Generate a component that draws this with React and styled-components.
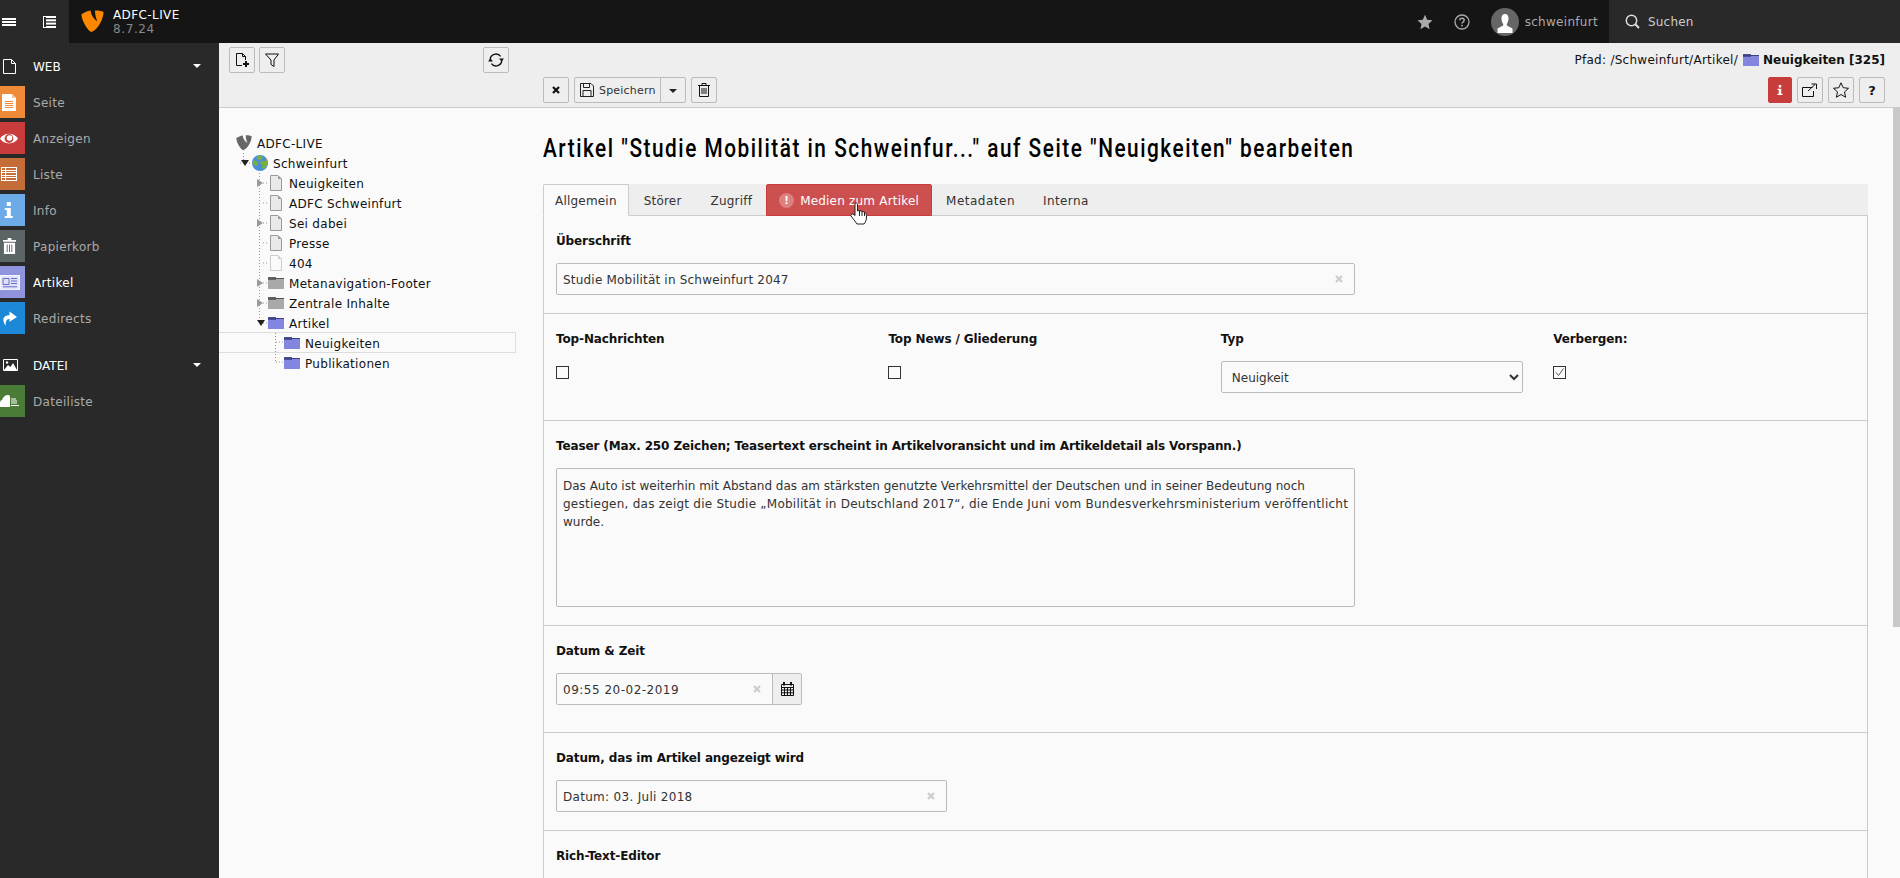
import React from "react";
import styled, { createGlobalStyle } from "styled-components";

const GlobalStyle = createGlobalStyle`
  html, body, #root { margin: 0; height: 100%; }
  body {
    overflow: hidden;
    background: #fafafa;
    font-family: "DejaVu Sans", Verdana, sans-serif;
    font-size: 12px;
    color: #111;
  }
  * { box-sizing: border-box; }
`;

// STYLED-COMPONENT
const Page = styled.div`
  height: 878px;
  display: flex;
  flex-direction: column;
`;
const Topbar = styled.header`
  height: 43px;
  flex: none;
  display: flex;
  align-items: stretch;
  background: #151515;
`;
const TopButton = styled.div`
  width: ${p => p.$w}px;
  padding-left: ${p => p.$pad}px;
  background: #292929;
  display: flex;
  align-items: center;
`;
const Brand = styled.div`
  display: flex;
  align-items: center;
  padding-left: 12px;
  gap: 9px;
`;
const BrandText = styled.div`
  color: #fff;
  font-size: 12px;
  line-height: 14px;
  letter-spacing: 0.4px;
  padding-top: 1px;
  small {
    display: block;
    font-size: 12px;
    letter-spacing: 0.6px;
    color: #888;
  }
`;
const TopRight = styled.div`
  margin-left: auto;
  display: flex;
  align-items: center;
  color: #aaa;
`;
const TopIcon = styled.span`
  display: flex;
  margin-right: ${p => p.$mr}px;
`;
const Avatar = styled.span`
  width: 28px;
  height: 28px;
  border-radius: 50%;
  background: #666;
  display: flex;
  align-items: center;
  justify-content: center;
  margin-right: 6px;
  overflow: hidden;
`;
const UserName = styled.span`
  margin-right: 11px;
  letter-spacing: 0.3px;
`;
const SearchBox = styled.div`
  width: 291px;
  align-self: stretch;
  background: #292929;
  display: flex;
  align-items: center;
  padding-left: 16px;
  gap: 8px;
  color: #ccc;
  letter-spacing: 0.2px;
`;
const Body = styled.div`
  flex: 1;
  display: flex;
  min-height: 0;
`;
const Sidebar = styled.nav`
  width: 219px;
  flex: none;
  background: #292929;
  display: flex;
  flex-direction: column;
  gap: 4px;
`;
const GroupHead = styled.div`
  height: 43px;
  padding-top: 3px;
  margin-bottom: -4px;
  margin-top: ${p => (p.$first ? 0 : 4)}px;
  display: flex;
  align-items: center;
  color: #fff;
`;
const GroupIcon = styled.span`
  width: 33px;
  display: flex;
  padding-left: 3px;
`;
const Caret = styled.i`
  margin-left: auto;
  margin-right: 18px;
  width: 0;
  height: 0;
  border-left: 4px solid transparent;
  border-right: 4px solid transparent;
  border-top: 4px solid #fff;
`;
const NavItem = styled.div`
  height: 32px;
  display: flex;
  align-items: center;
  letter-spacing: 0.3px;
  color: ${p => (p.$active ? "#fff" : "#aaa")};
`;
const NavIcon = styled.span`
  width: 25px;
  height: 32px;
  margin-right: 8px;
  padding-right: ${p => (p.$pr === undefined ? 7 : p.$pr)}px;
  background: ${p => p.$bg};
  display: flex;
  align-items: center;
  justify-content: center;
`;
// text sits a pixel lower than flex centering puts it
const Txt = styled.span`
  padding-top: 2px;
  white-space: nowrap;
  ${p => p.$ls && `letter-spacing: ${p.$ls}px;`}
`;
const Main = styled.div`
  flex: 1;
  min-width: 0;
  display: flex;
  flex-direction: column;
`;
const DocHeader = styled.div`
  height: 65px;
  flex: none;
  background: #eee;
  border-bottom: 1px solid #ccc;
  display: flex;
`;
const TreeTools = styled.div`
  width: 324px;
  flex: none;
  padding: 4px 34px 0 10px;
  display: flex;
  align-items: flex-start;
  gap: 4px;
`;
const DocTools = styled.div`
  flex: 1;
  display: flex;
  flex-direction: column;
  padding-right: 15px;
`;
const PathRow = styled.div`
  height: 34px;
  display: flex;
  align-items: center;
  justify-content: flex-end;
  gap: 4px;
  font-size: 12px;
  b { font-weight: 700; }
  span { margin-right: 1px; letter-spacing: 0.27px; }
`;
const ButtonRow = styled.div`
  display: flex;
  align-items: center;
  gap: 5px;
`;
const Btn = styled.div`
  width: ${p => p.$w || 26}px;
  height: 26px;
  background: ${p => (p.$danger ? "#c83c3c" : "#eee")};
  border: 1px solid ${p => (p.$danger ? "#c83c3c" : "#bbb")};
  border-radius: 2px;
  display: flex;
  align-items: center;
  justify-content: center;
  margin-left: ${p => (p.$push ? "auto" : 0)};
  flex: none;
`;
const SaveGroup = styled.div`
  height: 26px;
  width: 112px;
  border: 1px solid #bbb;
  border-radius: 2px;
  background: #eee;
  display: flex;
  align-items: center;
  font-size: 11px;
  letter-spacing: 0.2px;
  color: #333;
`;
const SaveMain = styled.div`
  flex: 1;
  display: flex;
  align-items: center;
  gap: 5px;
  padding-left: 5px;
  height: 100%;
  border-right: 1px solid #bbb;
`;
const SaveCaret = styled.div`
  width: 24px;
  display: flex;
  justify-content: center;
  i {
    border-left: 4px solid transparent;
    border-right: 4px solid transparent;
    border-top: 4px solid #222;
    margin-top: 1px;
  }
`;
const Workspace = styled.div`
  flex: 1;
  display: flex;
  min-height: 0;
`;
const TreePanel = styled.aside`
  width: 324px;
  flex: none;
  padding-top: 25px;
  position: relative;
`;
const TreeLines = styled.svg`
  position: absolute;
  left: 0;
  top: 0;
`;
const TreeRow = styled.div`
  height: 20px;
  width: 297px;
  position: relative;
  display: flex;
  align-items: center;
  padding-left: ${p => 5 + p.$level * 16}px;
  color: #111;
  letter-spacing: 0.3px;
  ${p =>
    p.$selected &&
    `&::after {
      content: "";
      position: absolute;
      left: 0;
      right: 0;
      top: -1px;
      bottom: 0;
      border: 1px solid #ddd;
      border-left: 0;
    }`}
`;
const Twist = styled.span`
  width: 12px;
  display: flex;
  padding-left: 1px;
`;
const ArrowRight = styled.i`
  border-top: 4px solid transparent;
  border-bottom: 4px solid transparent;
  border-left: 6px solid #999;
`;
const ArrowDown = styled.i`
  border-left: 4px solid transparent;
  border-right: 4px solid transparent;
  border-top: 6px solid #222;
`;
const TreeIcon = styled.span`
  width: 16px;
  height: 16px;
  margin-right: 5px;
  display: flex;
  align-items: center;
  justify-content: center;
`;
const Content = styled.main`
  flex: 1;
  min-width: 0;
  display: flex;
  flex-direction: column;
  padding-top: 21px;
  padding-right: 25px;
`;
const Title = styled.h1`
  margin: 0 0 17px;
  height: 38px;
  line-height: 38px;
  font-family: Roboto, "Liberation Sans", sans-serif;
  font-weight: 500;
  font-size: 26px;
  letter-spacing: 1.9px;
  color: #000;
  white-space: nowrap;
  transform: scaleX(0.8);
  transform-origin: left center;
`;
const TabBar = styled.div`
  height: 32px;
  flex: none;
  display: flex;
  background: #eee;
  box-shadow: inset 0 -1px 0 #ccc;
`;
const Tab = styled.div`
  display: flex;
  align-items: center;
  gap: 6px;
  padding: 0 ${p => (p.$pad ? p.$pad : 14)}px;
  letter-spacing: 0.2px;
  color: ${p => (p.$error ? "#fff" : "#333")};
  background: ${p => (p.$active ? "#fafafa" : p.$error ? "#cd5051" : "transparent")};
  border: 1px solid ${p => (p.$active ? "#ccc" : p.$error ? "#c83c3c" : "transparent")};
  ${p => p.$active && "border-bottom-color: #fafafa; border-radius: 2px 2px 0 0;"}
  ${p => p.$error && "position: relative; border-radius: 2px 2px 0 0;"}
  border-left-width: ${p => (p.$active || p.$error ? 1 : 0)}px;
  border-right-width: ${p => (p.$active || p.$error ? 1 : 0)}px;
`;
const TabBadge = styled.span`
  width: 15px;
  height: 15px;
  border-radius: 50%;
  background: #dc8080;
  color: #fff;
  font-weight: 700;
  font-size: 10px;
  display: flex;
  align-items: center;
  justify-content: center;
`;
const HandCursor = styled.svg`
  position: absolute;
  left: 83px;
  top: 17px;
`;
const FormPanel = styled.div`
  flex: 1;
  min-height: 0;
  overflow: hidden;
  border-left: 1px solid #ccc;
  border-right: 1px solid #ccc;
`;
const Section = styled.section`
  padding: 15px 12px ${p => (p.$tall ? 27 : 18)}px;
  border-bottom: 1px solid #ccc;
`;
const Label = styled.div`
  font-weight: 700;
  line-height: 18px;
  padding-top: 1px;
  height: 18px;
  margin-bottom: 14px;
  letter-spacing: -0.12px;
  color: #111;
  white-space: nowrap;
`;
const Columns = styled.div`
  display: grid;
  grid-template-columns: repeat(4, 302px);
  column-gap: 30.4px;
`;
const Cell = styled.div`
  display: flex;
  flex-direction: column;
  align-items: flex-start;
`;
const Field = styled.div`
  width: ${p => p.$w}px;
  height: 32px;
  border: 1px solid #bbb;
  border-radius: 2px;
  background: #fafafa;
  display: flex;
  align-items: center;
  padding-left: 6px;
  color: #333;
`;
const Clear = styled.span`
  margin-left: auto;
  margin-right: 11px;
  color: #ccc;
  display: flex;
`;
const Addon = styled.span`
  width: 29px;
  height: 100%;
  background: #eee;
  border-left: 1px solid #bbb;
  display: flex;
  align-items: center;
  justify-content: center;
`;
const TextBox = styled.div`
  width: 799px;
  height: 139px;
  border: 1px solid #bbb;
  border-radius: 2px;
  padding: 8px 6px;
  line-height: 18px;
  color: #333;
`;
const TextLine = styled.div`
  white-space: nowrap;
  letter-spacing: ${p => p.$ls || 0}px;
`;
const Check = styled.span`
  display: flex;
  width: 13px;
  height: 13px;
  margin-top: 5px;
  border: 1px solid #333;
  background: #fafafa;
`;
const SelectBox = styled.select`
  width: 302px;
  height: 32px;
  border: 1px solid #bbb;
  border-radius: 2px;
  background: #fafafa;
  padding: 2px 6px 0;
  color: #333;
  font: inherit;
`;
const Scrollbar = styled.div`
  width: 7px;
  flex: none;
  background: #c8c8c8;
  height: 519px;
`;
const ScrollColumn = styled.div`
  width: 7px;
  flex: none;
  background: #fafafa;
`;

// ICONS
const Typo3 = ({ size = 23, color = "#ff8700" }) => (
  <svg width={size} height={size} viewBox="0 0 24 24">
    <path
      fill={color}
      d="M.5 4.5C3.5 2.5 7 1 10 .6C10.6 5 13 9.5 17 12C15.5 8 14.5 4 14.6 .5C17.5 .2 21 .8 23.5 2C23.5 9 18 20 11 23C7 22 .5 11 .5 4.5Z"
    />
  </svg>
);
const Hamburger = () => (
  <svg width="14" height="8" viewBox="0 0 14 8" fill="#fff">
    <rect width="14" height="2" />
    <rect y="3" width="14" height="2" />
    <rect y="6" width="14" height="2" />
  </svg>
);
const ListIcon = () => (
  <svg width="13" height="12" viewBox="0 0 13 12" fill="#fff">
    <path d="M0 0h1v12H0zM0 11h3v1H0zM0 0h3v1H0z" />
    <rect x="3" y="0" width="10" height="2" />
    <rect x="3" y="3.3" width="10" height="2" />
    <rect x="3" y="6.6" width="10" height="2" />
    <rect x="3" y="10" width="10" height="2" />
  </svg>
);
const Star = ({ fill = "#aaa", stroke = "none", size = 16 }) => (
  <svg width={size} height={size} viewBox="0 0 16 16">
    <path fill={fill} stroke={stroke} d="M8 .8l2.2 4.9 5.3.6-4 3.6 1.1 5.3L8 12.5l-4.6 2.7 1.1-5.3-4-3.6 5.3-.6z" />
  </svg>
);
const Help = () => (
  <svg width="16" height="16" viewBox="0 0 16 16" fill="none" stroke="#aaa">
    <circle cx="8" cy="8" r="7" strokeWidth="1.3" />
    <path d="M5.8 6.2C5.8 3.6 10.2 3.6 10.2 6.2C10.2 7.8 8 7.8 8 9.6" strokeWidth="1.5" />
    <rect x="7.2" y="10.8" width="1.6" height="1.6" fill="#aaa" stroke="none" />
  </svg>
);
const Person = () => (
  <svg width="20" height="22" viewBox="0 0 20 22" fill="#fff">
    <path d="M10 3C7.4 3 6.3 5 6.5 8C6.7 10.5 7.5 12 8.2 13V14.5L2.5 17.5V22H17.5V17.5L11.8 14.5V13C12.5 12 13.3 10.5 13.5 8C13.7 5 12.6 3 10 3Z" />
  </svg>
);
const SearchIcon = () => (
  <svg width="15" height="15" viewBox="0 0 15 15" fill="none" stroke="#ddd" strokeWidth="1.5">
    <circle cx="6.5" cy="6.5" r="5.2" />
    <path d="M10.3 10.3L14 14" strokeWidth="2" />
  </svg>
);
const NewPage = () => (
  <svg width="16" height="16" viewBox="0 0 16 16" fill="none" stroke="#111">
    <path d="M8 13.5H2.5V1.5H8.5L11.5 4.5V8M8.5 1.5V4.5H11.5" />
    <path d="M12 9V15M9 12H15" strokeWidth="2" />
  </svg>
);
const FilterIcon = () => (
  <svg width="16" height="16" viewBox="0 0 16 16" fill="none" stroke="#111">
    <path d="M1.5 2H14.5L10 8V14.5L7 12.5V8Z" />
  </svg>
);
const RefreshIcon = () => (
  <svg width="16" height="16" viewBox="0 0 16 16" fill="none" stroke="#111" strokeWidth="1.4">
    <path d="M2.2 8A5.8 5.8 0 0 1 12.6 4.4" />
    <path d="M13.8 8A5.8 5.8 0 0 1 3.4 11.6" />
    <path d="M11 6.5H16L13.5 9.5Z" fill="#111" stroke="none" />
    <path d="M0 9.5H5L2.5 6.5Z" fill="#111" stroke="none" />
  </svg>
);
const CloseIcon = ({ size = 8, color = "#111", w = 2.2 }) => (
  <svg width={size} height={size} viewBox="0 0 8 8" stroke={color} strokeWidth={w}>
    <path d="M1 1L7 7M7 1L1 7" />
  </svg>
);
const SaveIcon = () => (
  <svg width="14" height="14" viewBox="0 0 14 14" fill="none" stroke="#222">
    <path d="M.5.5H11L13.5 3V13.5H.5Z" />
    <path d="M3.5.5V4.5H9.5V.5M3 13.5V7.5H11V13.5" />
  </svg>
);
const TrashIcon = () => (
  <svg width="12" height="14" viewBox="0 0 12 14" fill="none" stroke="#111">
    <path d="M0 2.5H12M4 2.5V.5H8V2.5M1.5 2.5V13.5H10.5V2.5M4 5V11M6 5V11M8 5V11" />
  </svg>
);
const InfoIcon = ({ color = "#fff", size = 12 }) => (
  <svg width={size * 0.6} height={size} viewBox="0 0 6 12" fill={color}>
    <rect x="1.5" y="0" width="3" height="3" />
    <path d="M0 4.5H4.5V10.5H6V12H0V10.5H1.5V6H0Z" />
  </svg>
);
const OpenIcon = () => (
  <svg width="16" height="14" viewBox="0 0 16 14" fill="none" stroke="#111">
    <path d="M10.5 4.5H.5V13.5H11.5V8" />
    <path d="M6 8L13 1.5M9.5 1H14.5V6" />
  </svg>
);
const QuestionMark = styled.span`
  font-weight: 700;
  font-size: 13px;
  color: #111;
`;
const PageIcon = ({ light }) => (
  <svg width="12" height="16" viewBox="0 0 12 16">
    <path
      d="M.5.5H8L11.5 4V15.5H.5Z"
      fill={light ? "#fafafa" : "#e9e9e9"}
      stroke={light ? "#ccc" : "#999"}
    />
    <path d="M8 .5V4H11.5Z" fill={light ? "#ccc" : "#999"} />
  </svg>
);
const FolderIcon = ({ grey }) => (
  <svg width="16" height="12" viewBox="0 0 16 12">
    <rect y="2" width="16" height="10" fill={grey ? "#a9a9a9" : "#8286de"} />
    <rect y="0" width="8" height="3" fill={grey ? "#666" : "#4e5098"} />
    <rect y="1" width="16" height="1" fill={grey ? "#555" : "#3e4080"} />
  </svg>
);
const Globe = () => (
  <svg width="16" height="16" viewBox="0 0 16 16">
    <circle cx="8" cy="8" r="8" fill="#4a8fd8" />
    <path d="M5 1L9 .5L11 3L8 5L5 4.5ZM1.5 5L6 7L5.5 11L3 10.5L.5 8ZM9 6L15.5 6L15 10L12 14L10 13L10.5 10L8 8.5Z" fill="#7bb03a" />
    <path d="M13 2.5A8 8 0 0 1 16 8L14.5 6Z" fill="#d8913a" />
  </svg>
);
const CalendarIcon = () => (
  <svg width="13" height="14" viewBox="0 0 13 14" fill="none" stroke="#111">
    <path d="M.5 2.5H12.5V13.5H.5ZM.5 5.5H12.5M.5 8H12.5M.5 10.8H12.5M3.5 5.5V13.5M6.5 5.5V13.5M9.5 5.5V13.5" />
    <rect x="2" y="0" width="2" height="3.5" fill="#111" stroke="none" />
    <rect x="9" y="0" width="2" height="3.5" fill="#111" stroke="none" />
  </svg>
);
const CheckMark = () => (
  <svg width="11" height="11" viewBox="0 0 11 11" fill="none" stroke="#555">
    <path d="M2 5.5L4.5 8.5L9.5 1.5" />
  </svg>
);

const NavGlyphs = {
  page: (
    <svg width="14" height="17" viewBox="0 0 14 17" fill="#fff">
      <path d="M0 0H10L14 4V17H0Z" />
      <path d="M3 7.5H11M3 9.5H11M3 11.5H11M3 13.5H11" stroke="#ef8a38" />
      <path d="M10 0L14 4H10Z" fill="#f8c89c" />
    </svg>
  ),
  view: (
    <svg width="18" height="13" viewBox="0 0 18 13">
      <path d="M0 6.5C4 0 14 0 18 6.5C14 13 4 13 0 6.5Z" fill="#fff" />
      <circle cx="9" cy="6.5" r="4.4" fill="#c83c3c" />
      <circle cx="9.5" cy="6" r="2.8" fill="#fff" />
    </svg>
  ),
  list: (
    <svg width="16" height="15" viewBox="0 0 16 15" fill="none" stroke="#fff">
      <path d="M0 .5H16M0 3.5H16M0 5.5H16M0 8.5H16M0 10.5H16M0 13.5H16M.5 .5V13.5M15.5 .5V13.5M4.5 .5V13.5" />
    </svg>
  ),
  info: <InfoIcon size={16} />,
  trash: (
    <svg width="13" height="16" viewBox="0 0 14 17" fill="#fff">
      <path d="M0 2H14V4H0ZM5 0H9V2H5ZM1 5H13V17H1Z" />
      <path d="M4.5 7V15M7 7V15M9.5 7V15" stroke="#5c6566" />
    </svg>
  ),
  news: (
    <svg width="20" height="15" viewBox="0 0 20 15" fill="none" stroke="#fff">
      <path d="M.5 .5H19.5V14.5H.5Z" fill="#dfe1f8" stroke="#f4f4ff" strokeWidth="1.4" />
      <path d="M3 3.5H9V9.5H3ZM11 3.5H17M11 6H17M11 8.5H17M3 11.8H17" stroke="#6a70c8" />
    </svg>
  ),
  redirect: (
    <svg width="15" height="15" viewBox="0 0 16 15" fill="#fff">
      <path d="M8 0L16 6L8 11V8C5 8 3.5 10 4 15C1 12 -1 4 8 4Z" />
    </svg>
  ),
  files: (
    <svg width="19" height="12" viewBox="0 0 19 12" fill="#fff">
      <path d="M0 12V8C0 6 1 5 2 5C3 2 5 0 8 0C10 0 10 1 10 3V12Z" />
      <path d="M11 4H16M11 6H17M11 8H17M11 10.5H19" stroke="#fff" fill="none" />
    </svg>
  )
};

const tree = [
  { level: 0, icon: <Typo3 size={16} color="#666" />, label: "ADFC-LIVE" },
  { level: 1, open: true, icon: <Globe />, label: "Schweinfurt" },
  { level: 2, closed: true, icon: <PageIcon />, label: "Neuigkeiten" },
  { level: 2, icon: <PageIcon />, label: "ADFC Schweinfurt" },
  { level: 2, closed: true, icon: <PageIcon />, label: "Sei dabei" },
  { level: 2, icon: <PageIcon />, label: "Presse" },
  { level: 2, icon: <PageIcon light />, label: "404" },
  { level: 2, closed: true, icon: <FolderIcon grey />, label: "Metanavigation-Footer" },
  { level: 2, closed: true, icon: <FolderIcon grey />, label: "Zentrale Inhalte" },
  { level: 2, open: true, icon: <FolderIcon />, label: "Artikel" },
  { level: 3, selected: true, icon: <FolderIcon />, label: "Neuigkeiten" },
  { level: 3, icon: <FolderIcon />, label: "Publikationen" }
];

// COMPONENT
const App = () => (
  <>
    <GlobalStyle />
    <Page>
      <Topbar>
        <TopButton $w={34} $pad={2}>
          <Hamburger />
        </TopButton>
        <TopButton $w={35} $pad={9}>
          <ListIcon />
        </TopButton>
        <Brand>
          <Typo3 />
          <BrandText>
            ADFC-LIVE
            <small>8.7.24</small>
          </BrandText>
        </Brand>
        <TopRight>
          <TopIcon $mr={21}>
            <Star />
          </TopIcon>
          <TopIcon $mr={21}>
            <Help />
          </TopIcon>
          <Avatar>
            <Person />
          </Avatar>
          <UserName>schweinfurt</UserName>
          <SearchBox>
            <SearchIcon />
            Suchen
          </SearchBox>
        </TopRight>
      </Topbar>
      <Body>
        <Sidebar>
          <GroupHead $first>
            <GroupIcon>
              <svg width="13" height="15" viewBox="0 0 13 15" fill="none" stroke="#fff">
                <path d="M.5 .5H8.5L12.5 4.5V14.5H.5ZM8.5 .5V4.5H12.5" />
              </svg>
            </GroupIcon>
            <Txt>WEB</Txt>
            <Caret />
          </GroupHead>
          <NavItem>
            <NavIcon $bg="#ef8a38">{NavGlyphs.page}</NavIcon>
            <Txt>Seite</Txt>
          </NavItem>
          <NavItem>
            <NavIcon $bg="#c83c3c">{NavGlyphs.view}</NavIcon>
            <Txt>Anzeigen</Txt>
          </NavItem>
          <NavItem>
            <NavIcon $bg="#c46d38">{NavGlyphs.list}</NavIcon>
            <Txt>Liste</Txt>
          </NavItem>
          <NavItem>
            <NavIcon $bg="#6daae8">{NavGlyphs.info}</NavIcon>
            <Txt>Info</Txt>
          </NavItem>
          <NavItem>
            <NavIcon $bg="#5c6566">{NavGlyphs.trash}</NavIcon>
            <Txt>Papierkorb</Txt>
          </NavItem>
          <NavItem $active>
            <NavIcon $bg="#8f94dc" $pr={5}>{NavGlyphs.news}</NavIcon>
            <Txt>Artikel</Txt>
          </NavItem>
          <NavItem>
            <NavIcon $bg="#1e88d8">{NavGlyphs.redirect}</NavIcon>
            <Txt>Redirects</Txt>
          </NavItem>
          <GroupHead>
            <GroupIcon>
              <svg width="15" height="12" viewBox="0 0 15 12" fill="none" stroke="#fff">
                <path d="M.5 .5H14.5V11.5H.5Z" />
                <path d="M1 11L5 6L7.5 8L10 4L14 11Z" fill="#fff" stroke="none" />
                <circle cx="4" cy="3.5" r="1.2" fill="#fff" stroke="none" />
              </svg>
            </GroupIcon>
            <Txt>DATEI</Txt>
            <Caret />
          </GroupHead>
          <NavItem>
            <NavIcon $bg="#4a7c38" $pr={6}>{NavGlyphs.files}</NavIcon>
            <Txt>Dateiliste</Txt>
          </NavItem>
        </Sidebar>
        <Main>
          <DocHeader>
            <TreeTools>
              <Btn>
                <NewPage />
              </Btn>
              <Btn>
                <FilterIcon />
              </Btn>
              <Btn $push>
                <RefreshIcon />
              </Btn>
            </TreeTools>
            <DocTools>
              <PathRow>
                <span>Pfad: /Schweinfurt/Artikel/</span>
                <FolderIcon />
                <b>Neuigkeiten [325]</b>
              </PathRow>
              <ButtonRow>
                <Btn>
                  <CloseIcon />
                </Btn>
                <SaveGroup>
                  <SaveMain>
                    <SaveIcon />
                    Speichern
                  </SaveMain>
                  <SaveCaret>
                    <i />
                  </SaveCaret>
                </SaveGroup>
                <Btn>
                  <TrashIcon />
                </Btn>
                <Btn $danger $w={24} $push>
                  <InfoIcon size={10} />
                </Btn>
                <Btn>
                  <OpenIcon />
                </Btn>
                <Btn>
                  <Star fill="none" stroke="#111" />
                </Btn>
                <Btn>
                  <QuestionMark>?</QuestionMark>
                </Btn>
              </ButtonRow>
            </DocTools>
          </DocHeader>
          <Workspace>
            <TreePanel>
              <TreeLines width="324" height="280">
                <g stroke="#999" strokeDasharray="1 2" fill="none">
                  <path d="M24.5 45V55M21 55H33" />
                  <path d="M40.5 65V215M44 75H49M44 95H49M44 115H49M44 135H49M44 155H49M44 175H49M44 195H49M44 215H49" />
                  <path d="M56.5 225V254M57 234H65M57 254H65" />
                </g>
              </TreeLines>
              {tree.map((node, i) => (
                <TreeRow key={i} $level={node.level} $selected={node.selected}>
                  <Twist>
                    {node.open && <ArrowDown />}
                    {node.closed && <ArrowRight />}
                  </Twist>
                  <TreeIcon>{node.icon}</TreeIcon>
                  <Txt>{node.label}</Txt>
                </TreeRow>
              ))}
            </TreePanel>
            <Content>
              <Title>Artikel "Studie Mobilität in Schweinfur..." auf Seite "Neuigkeiten" bearbeiten</Title>
              <TabBar>
                <Tab $active $pad={11}>
                  <Txt>Allgemein</Txt>
                </Tab>
                <Tab $pad={15}>
                  <Txt>Störer</Txt>
                </Tab>
                <Tab>
                  <Txt>Zugriff</Txt>
                </Tab>
                <Tab $error $pad={12}>
                  <TabBadge>!</TabBadge>
                  <Txt>Medien zum Artikel</Txt>
                  <HandCursor width="18" height="23" viewBox="0 0 18 23">
                    <path
                      d="M5 1.5C6 .5 7.5 1 7.5 2.5V9L9 8.5L11 9L13 9.5L15 10.5C16.5 11.5 16.5 13 16.5 15C16.5 18 15.5 20 14 22H7C5 19 3 16.5 1 14C.5 13 1.5 11 3 12L5 13.5Z"
                      fill="#fff"
                      stroke="#222"
                    />
                    <path d="M9.5 9V14M12 9.5V14M14.5 10.5V14" stroke="#222" />
                  </HandCursor>
                </Tab>
                <Tab>
                  <Txt $ls={0.5}>Metadaten</Txt>
                </Tab>
                <Tab>
                  <Txt $ls={0.4}>Interna</Txt>
                </Tab>
              </TabBar>
              <FormPanel>
                <Section>
                  <Label>Überschrift</Label>
                  <Field $w={799}>
                    <Txt $ls={0.2}>Studie Mobilität in Schweinfurt 2047</Txt>
                    <Clear>
                      <CloseIcon color="#ccc" />
                    </Clear>
                  </Field>
                </Section>
                <Section $tall>
                  <Columns>
                    <Cell>
                      <Label>Top-Nachrichten</Label>
                      <Check />
                    </Cell>
                    <Cell>
                      <Label>Top News / Gliederung</Label>
                      <Check />
                    </Cell>
                    <Cell>
                      <Label>Typ</Label>
                      <SelectBox defaultValue="Neuigkeit">
                        <option>Neuigkeit</option>
                      </SelectBox>
                    </Cell>
                    <Cell>
                      <Label>Verbergen:</Label>
                      <Check>
                        <CheckMark />
                      </Check>
                    </Cell>
                  </Columns>
                </Section>
                <Section>
                  <Label>Teaser (Max. 250 Zeichen; Teasertext erscheint in Artikelvoransicht und im Artikeldetail als Vorspann.)</Label>
                  <TextBox>
                    <TextLine>Das Auto ist weiterhin mit Abstand das am stärksten genutzte Verkehrsmittel der Deutschen und in seiner Bedeutung noch</TextLine>
                    <TextLine $ls={0.25}>gestiegen, das zeigt die Studie „Mobilität in Deutschland 2017“, die Ende Juni vom Bundesverkehrsministerium veröffentlicht</TextLine>
                    <TextLine>wurde.</TextLine>
                  </TextBox>
                </Section>
                <Section $tall>
                  <Label>Datum & Zeit</Label>
                  <Field $w={246}>
                    <Txt $ls={0.5}>09:55 20-02-2019</Txt>
                    <Clear>
                      <CloseIcon color="#ccc" />
                    </Clear>
                    <Addon>
                      <CalendarIcon />
                    </Addon>
                  </Field>
                </Section>
                <Section>
                  <Label>Datum, das im Artikel angezeigt wird</Label>
                  <Field $w={391}>
                    <Txt $ls={0.3}>Datum: 03. Juli 2018</Txt>
                    <Clear>
                      <CloseIcon color="#ccc" />
                    </Clear>
                  </Field>
                </Section>
                <Section>
                  <Label>Rich-Text-Editor</Label>
                </Section>
              </FormPanel>
            </Content>
            <ScrollColumn>
              <Scrollbar />
            </ScrollColumn>
          </Workspace>
        </Main>
      </Body>
    </Page>
  </>
);

export default App;
